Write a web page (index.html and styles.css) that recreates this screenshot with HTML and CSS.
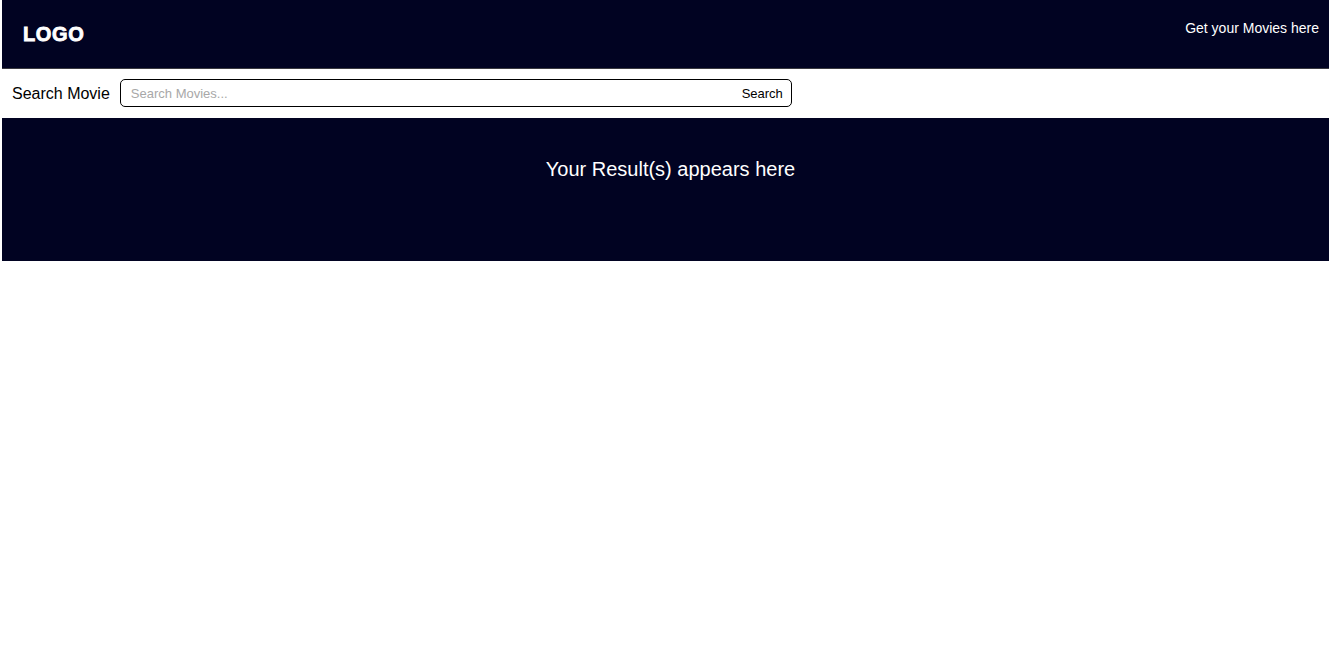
FILE: index.html
```html
<!DOCTYPE html>
<html lang="en">
<head>
<meta charset="utf-8">
<title>Movies</title>
<link rel="stylesheet" href="styles.css">
</head>
<body>
<div class="page">
  <header class="header">
    <div class="logo">LOGO</div>
    <div class="tagline">Get your Movies here</div>
  </header>
  <div class="search-row">
    <label class="search-label" for="q">Search Movie</label>
    <div class="search-box">
      <input id="q" class="search-input" type="text" placeholder="Search Movies...">
      <button class="search-btn" type="button">Search</button>
    </div>
  </div>
  <section class="results">
    <h2 class="results-title">Your Result(s) appears here</h2>
  </section>
</div>
</body>
</html>
```

FILE: styles.css
```css
* { box-sizing: border-box; }
html, body { margin: 0; padding: 0; background: #fff; }
body { font-family: "Liberation Sans", Arial, sans-serif; color: #000; }
.page { margin: 0 1px 0 2px; }
.header {
  height: 69px;
  background: #010322;
  border-bottom: 1px solid #3a3a40;
  display: flex;
  justify-content: space-between;
  align-items: flex-start;
  padding: 0 10px 0 21px;
}
.logo {
  color: #fff;
  font-weight: bold;
  font-size: 20px;
  letter-spacing: 0.6px;
  -webkit-text-stroke: 0.8px #fff;
  margin-top: 23px;
  line-height: 23px;
}
.tagline {
  color: #fff;
  font-size: 14px;
  line-height: 16px;
  margin-top: 20px;
}
.search-row {
  height: 49px;
  display: flex;
  align-items: center;
  padding: 0 0 1px 10px;
  gap: 10px;
}
.search-label { font-size: 16px; line-height: 18px; padding-top: 2px; }
.search-box {
  width: 672px;
  height: 28px;
  border: 1px solid #000;
  border-radius: 5px;
  display: flex;
  align-items: center;
  padding: 0 8px 0 10px;
}
.search-input {
  flex: 1;
  border: none;
  outline: none;
  background: transparent;
  font-family: "Liberation Sans", Arial, sans-serif;
  font-size: 13px;
  padding: 0;
  color: #000;
}
.search-input::placeholder { color: #a8a8a8; }
.search-btn {
  border: none;
  background: transparent;
  font-family: "Liberation Sans", Arial, sans-serif;
  font-size: 13px;
  padding: 0;
  color: #000;
  cursor: pointer;
}
.results {
  height: 143px;
  background: #010322;
  padding: 40px 0 0 10px;
}
.results-title {
  margin: 0;
  text-align: center;
  color: #fff;
  font-weight: normal;
  font-size: 20px;
  line-height: 23px;
}
```
